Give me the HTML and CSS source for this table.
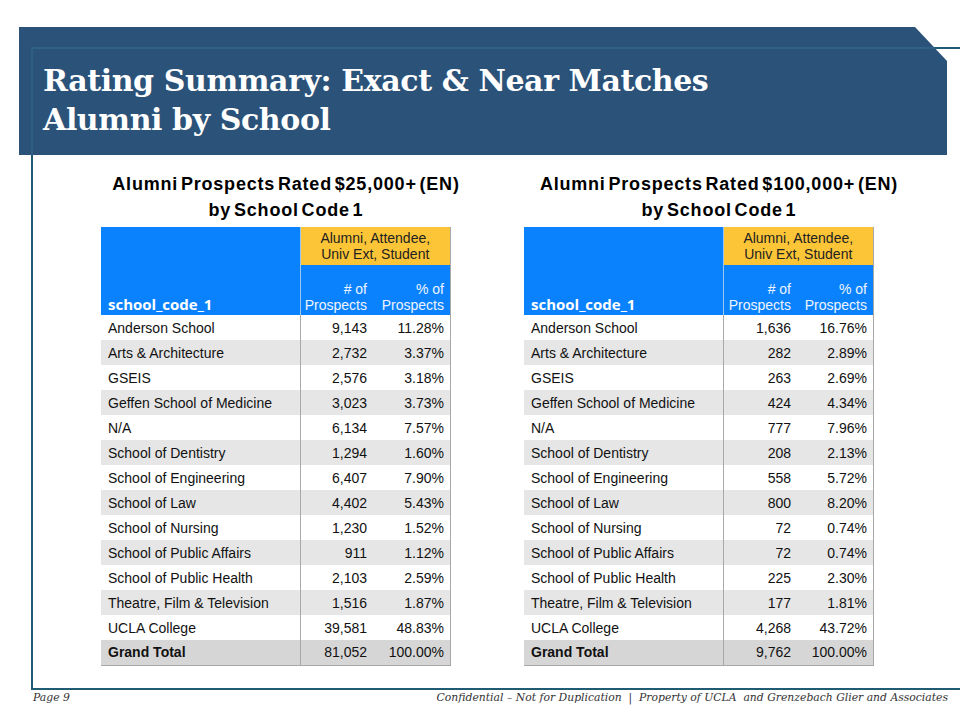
FILE: index.html
```html
<!DOCTYPE html>
<html>
<head>
<meta charset="utf-8">
<link rel="stylesheet" href="styles.css">
</head>
<body>
<div class="slide">
  <div class="frame"></div>
  <header class="band">
    <h1 class="title">Rating Summary: Exact &amp; Near Matches<br>Alumni by School</h1>
  </header>
  <main class="tables">
    <section class="panel">
      <h2 class="panel-title panel-title--left">Alumni Prospects Rated $25,000+ (EN)<br>by School Code 1</h2>
      <table class="grid grid--left">
        <thead>
          <tr>
            <th class="h-code" rowspan="2">school_code_1</th>
            <th class="h-group" colspan="2">Alumni, Attendee,<br>Univ Ext, Student</th>
          </tr>
          <tr>
            <th class="h-num">#&nbsp;of<br>Prospects</th>
            <th class="h-pct">%&nbsp;of<br>Prospects</th>
          </tr>
        </thead>
        <tbody>
          <tr><td>Anderson School</td><td>9,143</td><td>11.28%</td></tr>
          <tr><td>Arts &amp; Architecture</td><td>2,732</td><td>3.37%</td></tr>
          <tr><td>GSEIS</td><td>2,576</td><td>3.18%</td></tr>
          <tr><td>Geffen School of Medicine</td><td>3,023</td><td>3.73%</td></tr>
          <tr><td>N/A</td><td>6,134</td><td>7.57%</td></tr>
          <tr><td>School of Dentistry</td><td>1,294</td><td>1.60%</td></tr>
          <tr><td>School of Engineering</td><td>6,407</td><td>7.90%</td></tr>
          <tr><td>School of Law</td><td>4,402</td><td>5.43%</td></tr>
          <tr><td>School of Nursing</td><td>1,230</td><td>1.52%</td></tr>
          <tr><td>School of Public Affairs</td><td>911</td><td>1.12%</td></tr>
          <tr><td>School of Public Health</td><td>2,103</td><td>2.59%</td></tr>
          <tr><td>Theatre, Film &amp; Television</td><td>1,516</td><td>1.87%</td></tr>
          <tr><td>UCLA College</td><td>39,581</td><td>48.83%</td></tr>
          <tr class="total"><td>Grand Total</td><td>81,052</td><td>100.00%</td></tr>
        </tbody>
      </table>
    </section>
    <section class="panel">
      <h2 class="panel-title panel-title--right">Alumni Prospects Rated $100,000+ (EN)<br>by School Code 1</h2>
      <table class="grid grid--right">
        <thead>
          <tr>
            <th class="h-code" rowspan="2">school_code_1</th>
            <th class="h-group" colspan="2">Alumni, Attendee,<br>Univ Ext, Student</th>
          </tr>
          <tr>
            <th class="h-num">#&nbsp;of<br>Prospects</th>
            <th class="h-pct">%&nbsp;of<br>Prospects</th>
          </tr>
        </thead>
        <tbody>
          <tr><td>Anderson School</td><td>1,636</td><td>16.76%</td></tr>
          <tr><td>Arts &amp; Architecture</td><td>282</td><td>2.89%</td></tr>
          <tr><td>GSEIS</td><td>263</td><td>2.69%</td></tr>
          <tr><td>Geffen School of Medicine</td><td>424</td><td>4.34%</td></tr>
          <tr><td>N/A</td><td>777</td><td>7.96%</td></tr>
          <tr><td>School of Dentistry</td><td>208</td><td>2.13%</td></tr>
          <tr><td>School of Engineering</td><td>558</td><td>5.72%</td></tr>
          <tr><td>School of Law</td><td>800</td><td>8.20%</td></tr>
          <tr><td>School of Nursing</td><td>72</td><td>0.74%</td></tr>
          <tr><td>School of Public Affairs</td><td>72</td><td>0.74%</td></tr>
          <tr><td>School of Public Health</td><td>225</td><td>2.30%</td></tr>
          <tr><td>Theatre, Film &amp; Television</td><td>177</td><td>1.81%</td></tr>
          <tr><td>UCLA College</td><td>4,268</td><td>43.72%</td></tr>
          <tr class="total"><td>Grand Total</td><td>9,762</td><td>100.00%</td></tr>
        </tbody>
      </table>
    </section>
  </main>
  <footer class="footer">
    <span class="page">Page 9</span>
    <span class="conf">Confidential – Not for Duplication &nbsp;|&nbsp; Property of UCLA &nbsp;and Grenzebach Glier and Associates</span>
  </footer>
</div>
</body>
</html>
```

FILE: styles.css
```css
* { box-sizing: border-box; }
html, body { margin: 0; padding: 0; background: #fff; }
body { width: 960px; height: 720px; overflow: hidden; }

.slide {
  position: relative;
  width: 960px;
  height: 720px;
  padding-top: 27px;
  font-family: "Liberation Sans", Arial, sans-serif;
}

/* decorative frame lines drawn behind the content */
.frame {
  position: absolute;
  left: 31px;
  top: 47px;
  width: 940px;
  height: 643px;
  border-top: 2px solid #1f5b78;
  border-left: 2px solid #1f5b78;
  border-bottom: 2px solid #1f5b73;
  z-index: 0;
}

.band {
  position: relative;
  z-index: 1;
  margin-left: 19px;
  width: 928px;
  height: 128px;
  background: #2b5279;
  clip-path: polygon(0 0, 896px 0, 928px 34px, 928px 128px, 0 128px);
  padding: 34px 0 0 24px;
}
.band::after {
  content: "";
  position: absolute;
  left: 12px;
  top: 20px;
  right: 0;
  bottom: 0;
  border-top: 2px solid #2f6189;
  border-left: 2px solid #2e5e86;
  pointer-events: none;
}

.title {
  position: relative;
  z-index: 2;
  margin: 0;
  color: #fff;
  font-family: "DejaVu Serif", "Liberation Serif", serif;
  font-weight: bold;
  font-size: 30px;
  line-height: 39px;
  letter-spacing: -0.4px;
}

.tables {
  position: relative;
  z-index: 1;
  display: flex;
  padding-left: 101px;
  gap: 53px;
  margin-top: 16px;
}

.panel { display: flex; flex-direction: column; }

.panel-title {
  margin: 0 0 4px 0;
  text-align: center;
  font-size: 18px;
  font-weight: bold;
  line-height: 26px;
  color: #000;
  letter-spacing: 0.8px;
  word-spacing: -3px;
}
.panel-title--left { width: 370px; }
.panel-title--right { width: 390px; }

.grid {
  border-collapse: collapse;
  font-size: 14px;
  color: #111;
  border-right: 1px solid #a8a8a8;
  border-bottom: 1px solid #a8a8a8;
}
.grid--left { width: 350px; }
.grid--right { width: 350px; }

.grid th { font-weight: normal; padding: 0; }
.h-code {
  background: #0b82fd;
  color: #fff;
  text-align: left;
  vertical-align: bottom;
  font-family: "Open Sans", "Liberation Sans", sans-serif;
  font-weight: bold !important;
  font-size: 15px;
  padding: 0 0 1px 7px !important;
  width: 199px;
  border-right: 1px solid #9cc7f2;
}
.h-group {
  background: #fcc537;
  color: #222;
  height: 38px;
  font-size: 14px;
  line-height: 16px;
  text-align: center;
}
.h-num, .h-pct {
  background: #0b82fd;
  color: #eef4ff;
  height: 50px;
  text-align: right;
  vertical-align: bottom;
  font-size: 14px;
  line-height: 16px;
  padding: 0 6px 2px 0 !important;
}
.grid--left .h-num { width: 73px; }
.grid--right .h-num { width: 74px; }

.grid td {
  height: 25px;
  padding: 0 6px 0 7px;
  white-space: nowrap;
  line-height: 16px;
}
.grid td + td { text-align: right; padding-left: 0; padding-right: 6px; }
.grid td:first-child { border-right: 1px solid #a8a8a8; }
.grid tbody tr:nth-child(even) td { background: #e6e6e6; }
.grid tbody tr.total td { background: #d6d6d6; }
.grid tbody tr.total td:first-child { font-weight: bold; }

.footer {
  position: relative;
  z-index: 1;
  display: flex;
  justify-content: space-between;
  align-items: baseline;
  margin-top: 25px;
  padding: 0 12px 0 33px;
  font-family: "DejaVu Serif", "Liberation Serif", serif;
  font-style: italic;
  font-size: 10.8px;
  color: #333;
}
```
